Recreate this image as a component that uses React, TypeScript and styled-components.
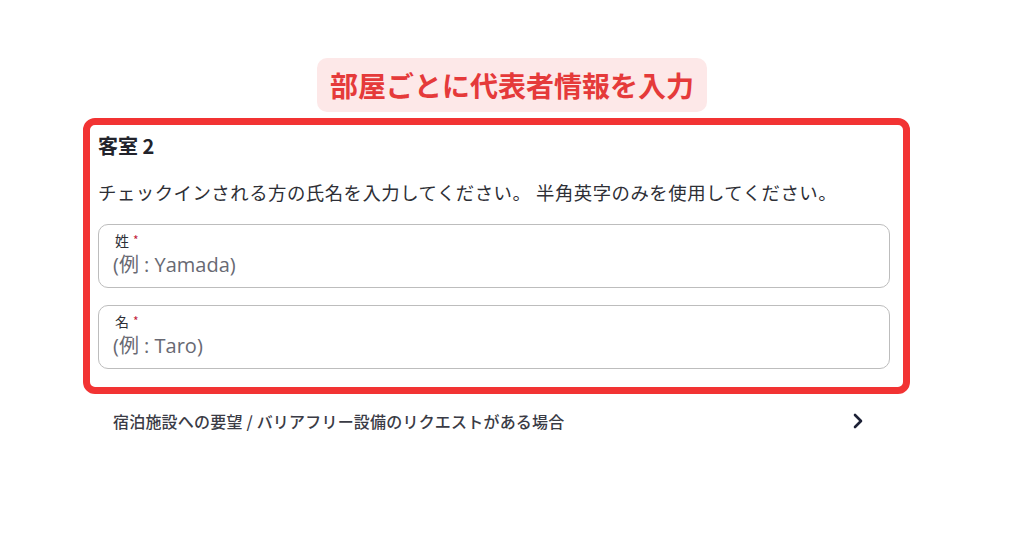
import React from "react";
import styled, { createGlobalStyle } from "styled-components";

const Global = createGlobalStyle`
  html, body { margin: 0; padding: 0; background: #ffffff; }
  body { font-family: "Noto Sans CJK JP", "Noto Sans", sans-serif; }
`;

const Page = styled.div`
  width: 1024px;
  height: 538px;
  display: flex;
  flex-direction: column;
  padding-top: 58px;
  box-sizing: border-box;
`;

const Callout = styled.div`
  align-self: center;
  background: #fde8e8;
  color: #e53a3a;
  font-weight: 700;
  font-size: 28px;
  line-height: 54px;
  height: 54px;
  padding: 0 13px;
  border-radius: 10px;
`;

const Highlight = styled.section`
  margin: 6px 0 0 83px;
  width: 827px;
  box-sizing: border-box;
  border: 7px solid #f23333;
  border-radius: 12px;
  padding: 8px 13px 18px 8px;
  display: flex;
  flex-direction: column;
`;

const RoomTitle = styled.h2`
  margin: 0;
  font-size: 20px;
  line-height: 26px;
  font-weight: 700;
  color: #22232b;
`;

const Note = styled.p`
  margin: 21px 0 0;
  font-size: 18.4px;
  line-height: 24px;
  letter-spacing: 0.5px;
  color: #2e2f36;
`;

const Fields = styled.div`
  margin-top: 20px;
  display: flex;
  flex-direction: column;
  gap: 17px;
`;

const Field = styled.label`
  display: flex;
  flex-direction: column;
  height: 64px;
  box-sizing: border-box;
  border: 1px solid #bdbdbd;
  border-radius: 10px;
  padding: 5px 14px 0;
`;

const FieldLabel = styled.span`
  font-size: 14px;
  line-height: 20px;
  color: #2e2f36;
  padding-left: 2px;
`;

const Required = styled.span`
  color: #c21d3b;
  font-size: 12px;
  margin-left: 4px;
  vertical-align: 1px;
`;

const Placeholder = styled.span`
  margin-top: 3px;
  font-family: "Open Sans", "Noto Sans CJK JP", sans-serif;
  font-size: 20px;
  line-height: 24px;
  color: #686973;
`;

const LinkRow = styled.div`
  margin: 15px 0 0 113px;
  width: 752px;
  display: flex;
  align-items: center;
  justify-content: space-between;
`;

const LinkText = styled.span`
  font-size: 16px;
  line-height: 24px;
  font-weight: 500;
  letter-spacing: 0.2px;
  color: #3a3b45;
`;

const Chevron = () => (
  <svg width="14" height="18" viewBox="0 0 14 18" fill="none">
    <path d="M4 3 L10 9 L4 15" stroke="#1d2136" strokeWidth="2.6" strokeLinecap="round" strokeLinejoin="round" />
  </svg>
);

export default function App() {
  return (
    <>
      <Global />
      <Page>
        <Callout>部屋ごとに代表者情報を入力</Callout>
        <Highlight>
          <RoomTitle>客室 2</RoomTitle>
          <Note>チェックインされる方の氏名を入力してください。 半角英字のみを使用してください。</Note>
          <Fields>
            <Field>
              <FieldLabel>
                姓<Required>*</Required>
              </FieldLabel>
              <Placeholder>(例 : Yamada)</Placeholder>
            </Field>
            <Field>
              <FieldLabel>
                名<Required>*</Required>
              </FieldLabel>
              <Placeholder>(例 : Taro)</Placeholder>
            </Field>
          </Fields>
        </Highlight>
        <LinkRow>
          <LinkText>宿泊施設への要望 / バリアフリー設備のリクエストがある場合</LinkText>
          <Chevron />
        </LinkRow>
      </Page>
    </>
  );
}
